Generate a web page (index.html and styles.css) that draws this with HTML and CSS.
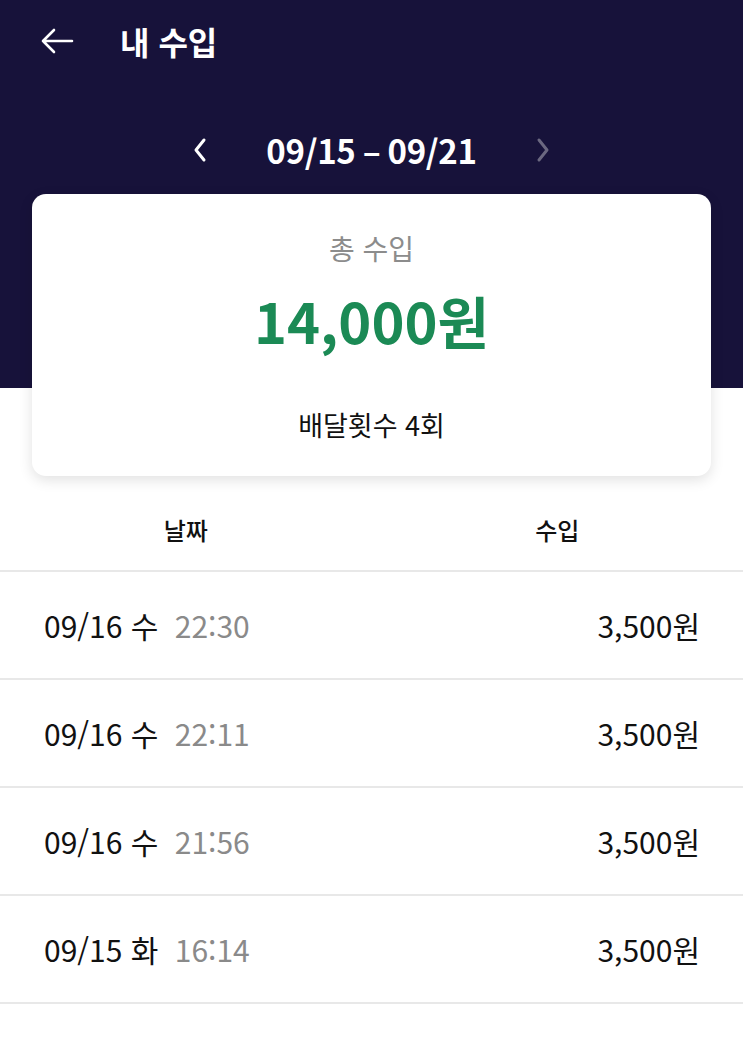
FILE: index.html
```html
<!DOCTYPE html>
<html lang="ko">
<head>
  <meta charset="UTF-8" />
  <meta name="viewport" content="width=device-width, initial-scale=1.0" />
  <title>내 수입</title>
  <link rel="stylesheet" href="styles.css">
</head>
<body>
  <div class="top">
    <div class="appbar">
      <svg class="back" width="34" height="26" viewBox="0 0 34 26">
        <path d="M32 13H3M14 2L3 13l11 11" fill="none" stroke="#fff" stroke-width="2.6" stroke-linecap="round" stroke-linejoin="round"/>
      </svg>
      <h1>내 수입</h1>
    </div>

    <div class="week">
      <svg width="14" height="26" viewBox="0 0 14 26">
        <path d="M11 3L3 13l8 10" fill="none" stroke="#fff" stroke-width="3" stroke-linecap="round" stroke-linejoin="round"/>
      </svg>
      <span class="range">09/15 – 09/21</span>
      <svg width="14" height="26" viewBox="0 0 14 26">
        <path d="M3 3l8 10-8 10" fill="none" stroke="#6b6880" stroke-width="3" stroke-linecap="round" stroke-linejoin="round"/>
      </svg>
    </div>
  </div>

  <div class="card">
    <div class="card-label">총 수입</div>
    <div class="card-total">14,000원</div>
    <div class="card-count">배달횟수 4회</div>
  </div>

  <div class="thead">
    <div>날짜</div>
    <div>수입</div>
  </div>

  <div class="row">
    <div class="when">09/16 수 <span class="time">22:30</span></div>
    <div class="amount">3,500원</div>
  </div>
  <div class="row">
    <div class="when">09/16 수 <span class="time">22:11</span></div>
    <div class="amount">3,500원</div>
  </div>
  <div class="row">
    <div class="when">09/16 수 <span class="time">21:56</span></div>
    <div class="amount">3,500원</div>
  </div>
  <div class="row">
    <div class="when">09/15 화 <span class="time">16:14</span></div>
    <div class="amount">3,500원</div>
  </div>
</body>
</html>
```

FILE: styles.css
```css
* { box-sizing: border-box; }
body {
  margin: 0;
  font-family: "Noto Sans CJK KR", "Noto Sans", sans-serif;
  background: #fff;
  color: #111;
}

.top {
  background: #17123a;
  height: 388px;
  color: #fff;
}

.appbar {
  height: 82px;
  display: flex;
  align-items: center;
  padding-left: 40px;
  gap: 46px;
}

.appbar h1 {
  margin: 0;
  font-size: 32px;
  font-weight: 700;
  line-height: 1;
}

.week {
  margin-top: 28px;
  height: 80px;
  display: flex;
  align-items: center;
  justify-content: center;
  gap: 59px;
}

.range {
  font-size: 33px;
  font-weight: 700;
  letter-spacing: -0.3px;
}

.card {
  margin: -194px 32px 0;
  position: relative;
  height: 282px;
  background: #fff;
  border-radius: 14px;
  box-shadow: 0 4px 14px rgba(0,0,0,0.12);
  text-align: center;
  padding-top: 34px;
}

.card-label {
  font-size: 28px;
  line-height: 40px;
  color: #8c8c8c;
}

.card-total {
  margin-top: 20px;
  font-size: 56px;
  line-height: 64px;
  font-weight: 700;
  color: #1b8a55;
}

.card-count {
  margin-top: 55px;
  font-size: 27px;
  line-height: 36px;
}

.thead {
  display: flex;
  height: 96px;
  padding-top: 12px;
  border-bottom: 2px solid #e8e8e8;
}

.thead div {
  flex: 1;
  display: flex;
  align-items: center;
  justify-content: center;
  font-size: 24px;
  font-weight: 500;
}

.row {
  height: 108px;
  display: flex;
  align-items: center;
  justify-content: space-between;
  padding: 0 43px 0 44px;
  border-bottom: 2px solid #e8e8e8;
  font-size: 30px;
}

.time {
  color: #8a8a8a;
  margin-left: 8px;
}
```
